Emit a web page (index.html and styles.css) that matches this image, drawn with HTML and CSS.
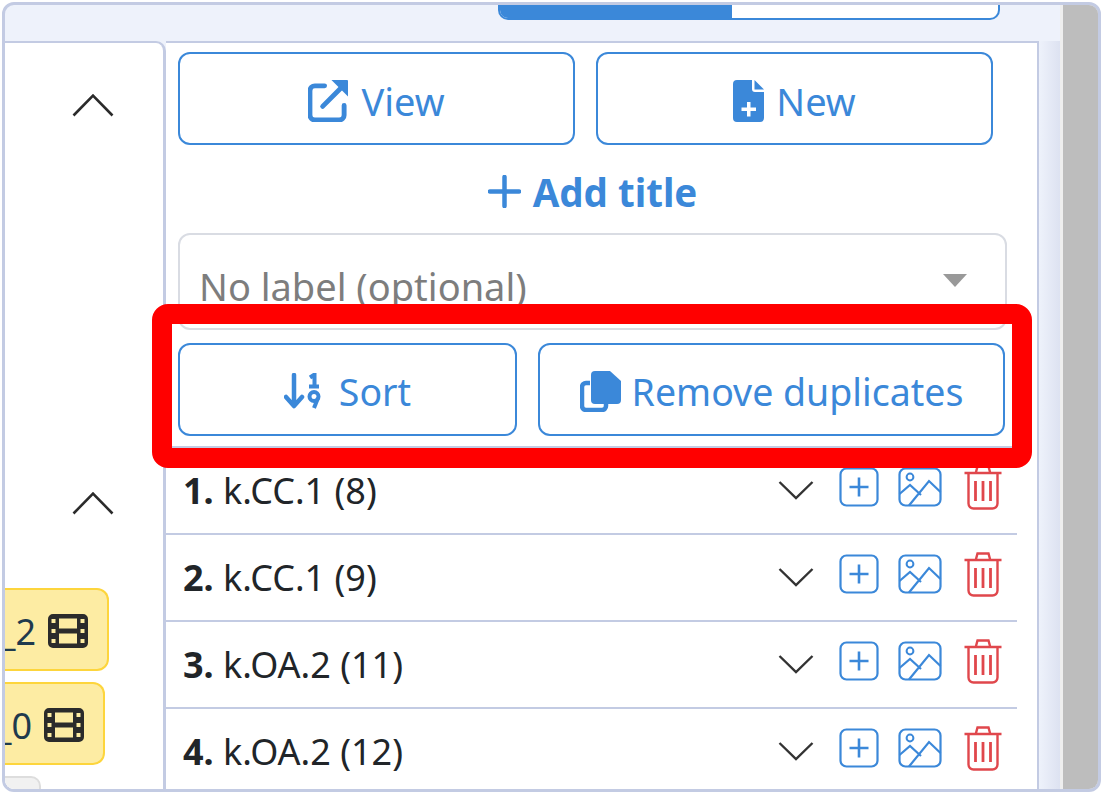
FILE: index.html
```html
<!DOCTYPE html>
<html lang="en">
<head>
    <meta charset="UTF-8">
    <title>Titles</title>
    <link rel="stylesheet" href="styles.css">
</head>
<body>
    <svg class="defs" width="0" height="0">
        <symbol id="i-chevron-up" viewBox="0 0 42 24"><path d="M1.5 22.5 21 2.5l19.5 20" fill="none" stroke="currentColor" stroke-width="2.6"/></symbol>
        <symbol id="i-chevron-down" viewBox="0 0 36 20"><path d="M1.500 2 18 18 34.500 2" fill="none" stroke="currentColor" stroke-width="2.4"/></symbol>
        <symbol id="i-plus" viewBox="0 0 40 40"><rect x="1.500" y="1.500" width="37" height="37" rx="6" fill="none" stroke="currentColor" stroke-width="2.200"/><path d="M20 10.500v19M10.500 20h19" fill="none" stroke="currentColor" stroke-width="2.600"/></symbol>
        <symbol id="i-image" viewBox="0 0 44 40"><rect x="1.500" y="1.500" width="41" height="37" rx="6" fill="none" stroke="currentColor" stroke-width="2.200"/><circle cx="12" cy="10" r="3.400" fill="none" stroke="currentColor" stroke-width="2"/><path d="M1.500 27 12 18l11 10M11 38.500 31 14l11.500 11" fill="none" stroke="currentColor" stroke-width="2.200"/></symbol>
        <symbol id="i-trash" viewBox="0 0 38 46"><path d="M4.500 10v29.500a5 5 0 0 0 5 5h19a5 5 0 0 0 5-5V10M.5 9h37M12 8l1.500-5.500h11L26 8" fill="none" stroke="currentColor" stroke-width="2.400"/><path d="M11.500 17v20M19 17v20M26.500 17v20" fill="none" stroke="currentColor" stroke-width="2.800"/></symbol>
        <symbol id="i-film" viewBox="0 0 40 34"><path fill-rule="evenodd" fill="currentColor" d="M5 0h30a5 5 0 0 1 5 5v24a5 5 0 0 1-5 5H5a5 5 0 0 1-5-5V5a5 5 0 0 1 5-5zM3.500 5v4h4V5zM32.500 5v4h4V5zM3.500 15v4h4v-4zM32.500 15v4h4v-4zM3.500 25v4h4v-4zM32.500 25v4h4v-4zM11 4.500v10h18v-10zM11 19.500v10h18v-10z"/></symbol>
    </svg>

    <div class="frame">
        <div class="app">
            <div class="tabbar">
                <div class="switch">
                    <span class="switch-on"></span>
                    <span class="switch-off"></span>
                </div>
            </div>
            <div class="columns">
                <aside class="left">
                    <div class="left-head">
                        <svg class="chev-up"><use href="#i-chevron-up"/></svg>
                    </div>
                    <div class="left-head second">
                        <svg class="chev-up"><use href="#i-chevron-up"/></svg>
                    </div>
                    <div class="chip one">_2 <svg class="film"><use href="#i-film"/></svg></div>
                    <div class="chip two">_0 <svg class="film"><use href="#i-film"/></svg></div>
                    <div class="left-tab"></div>
                </aside>

                <main class="detail">
                    <div class="actions">
                        <div class="btn-row">
                            <button class="btn big">
                                <svg class="ico" width="41" height="43" viewBox="0 0 42 44"><path d="M17 7H7a5 5 0 0 0-5 5v25a5 5 0 0 0 5 5h25a5 5 0 0 0 5-5V27" fill="none" stroke="currentColor" stroke-width="5" stroke-linecap="round"/><path d="M15 28 33 10" stroke="currentColor" stroke-width="5" stroke-linecap="round"/><path d="M24 1h16a1 1 0 0 1 1 1v16z" fill="currentColor"/></svg>
                                View
                            </button>
                            <button class="btn big">
                                <svg class="ico" width="31" height="42" viewBox="0 0 31 42"><path fill-rule="evenodd" fill="currentColor" d="M4 0h15v9a3 3 0 0 0 3 3h9v26a4 4 0 0 1-4 4H4a4 4 0 0 1-4-4V4a4 4 0 0 1 4-4zM14 22v5.500H8.500v3.500H14v5.500h3.500V31H23v-3.500h-5.500V22z"/><path fill="currentColor" d="M21.500 0 31 9.500h-9.500z"/></svg>
                                New
                            </button>
                        </div>
                        <div class="add-title">
                            <svg width="33" height="33" viewBox="0 0 33 33"><path d="M16.500 2v29M2 16.500h29" stroke="currentColor" stroke-width="4.500" stroke-linecap="round"/></svg>
                            Add title
                        </div>
                        <div class="select">
                            <span>No label (optional)</span>
                            <i class="caret"></i>
                        </div>
                        <div class="btn-row tools">
                            <button class="btn sort">
                                <svg class="ico" width="38" height="36" viewBox="0 0 38 36"><path d="M10 2v30M2 24l8 9 8-9" fill="none" stroke="currentColor" stroke-width="4.500" stroke-linecap="round" stroke-linejoin="round"/><path d="M26 4.500l4.500-3v11M25 13.500h10" fill="none" stroke="currentColor" stroke-width="4"/><circle cx="30" cy="23.500" r="4.500" fill="none" stroke="currentColor" stroke-width="4"/><path d="M34 25l-4 10" stroke="currentColor" stroke-width="4"/></svg>
                                Sort
                            </button>
                            <button class="btn dedupe">
                                <svg class="ico" width="41" height="41" viewBox="0 0 41 41"><path d="M10 12H6a4 4 0 0 0-4 4v19a4 4 0 0 0 4 4h16a4 4 0 0 0 4-4v-2" fill="none" stroke="currentColor" stroke-width="4.500"/><path fill="currentColor" d="M15 0h15l11 10v19a4 4 0 0 1-4 4H15a4 4 0 0 1-4-4V4a4 4 0 0 1 4-4z"/></svg>
                                Remove duplicates
                            </button>
                        </div>
                    </div>

                    <ol class="titles">
                        <li class="title-row">
                            <span class="title-name"><b>1.</b> k.CC.1 (8)</span>
                            <span class="row-icons">
                                <svg class="chev-down"><use href="#i-chevron-down"/></svg>
                                <svg class="add"><use href="#i-plus"/></svg>
                                <svg class="pic"><use href="#i-image"/></svg>
                                <svg class="bin"><use href="#i-trash"/></svg>
                            </span>
                        </li>
                        <li class="title-row">
                            <span class="title-name"><b>2.</b> k.CC.1 (9)</span>
                            <span class="row-icons">
                                <svg class="chev-down"><use href="#i-chevron-down"/></svg>
                                <svg class="add"><use href="#i-plus"/></svg>
                                <svg class="pic"><use href="#i-image"/></svg>
                                <svg class="bin"><use href="#i-trash"/></svg>
                            </span>
                        </li>
                        <li class="title-row">
                            <span class="title-name"><b>3.</b> k.OA.2 (11)</span>
                            <span class="row-icons">
                                <svg class="chev-down"><use href="#i-chevron-down"/></svg>
                                <svg class="add"><use href="#i-plus"/></svg>
                                <svg class="pic"><use href="#i-image"/></svg>
                                <svg class="bin"><use href="#i-trash"/></svg>
                            </span>
                        </li>
                        <li class="title-row">
                            <span class="title-name"><b>4.</b> k.OA.2 (12)</span>
                            <span class="row-icons">
                                <svg class="chev-down"><use href="#i-chevron-down"/></svg>
                                <svg class="add"><use href="#i-plus"/></svg>
                                <svg class="pic"><use href="#i-image"/></svg>
                                <svg class="bin"><use href="#i-trash"/></svg>
                            </span>
                        </li>
                    </ol>
                </main>
                <div class="gutter"></div>
            </div>
        </div>
        <div class="scrollbar"></div>
        <div class="highlight"></div>
    </div>
</body>
</html>
```

FILE: styles.css
```css
* {
    box-sizing: border-box;
}
html, body {
    margin: 0;
    height: 100%;
    background: #fff;
    overflow: hidden;
}
body {
    padding: 2px 2px 1px 2px;
    font-family: "Noto Sans", "Open Sans", Arial, sans-serif;
    font-size: 36px;
    color: #212529;
}
.defs {
    position: absolute;
}
.frame {
    position: relative;
    display: flex;
    height: 100%;
    border: 3px solid #c3cbe3;
    border-radius: 12px;
    overflow: hidden;
    background: #eef2fb;
}
.app {
    flex: 1;
    display: flex;
    flex-direction: column;
    min-width: 0;
}
.scrollbar {
    width: 38px;
    background: #bdbdbd;
    border-left: 3px solid #eee;
}

/* top switch */
.tabbar {
    height: 36px;
    padding-left: 493px;
    flex: none;
}
.switch {
    display: flex;
    width: 502px;
    height: 15px;
    border: 2px solid #3b88d9;
    border-top: 0;
    border-radius: 0 0 10px 10px;
    overflow: hidden;
    background: #fff;
}
.switch-on {
    width: 232px;
    background: #3b88d9;
}

.columns {
    flex: 1;
    display: flex;
    min-height: 0;
}

/* left column */
.left {
    width: 161px;
    flex: none;
    background: #fff;
    border-right: 3px solid #c3cbe3;
    border-top: 2px solid #c3cbe3;
    border-top-right-radius: 10px;
    display: flex;
    flex-direction: column;
    overflow: hidden;
}
.left-head {
    flex: none;
    height: 48px;
    margin-top: 50px;
    padding-left: 67px;
}
.left-head.second {
    margin-top: 350px;
    height: 48px;
}
.chev-up {
    display: block;
    width: 42px;
    height: 24px;
    color: #2b2b2b;
}
.chip {
    flex: none;
    display: flex;
    align-items: center;
    justify-content: flex-end;
    gap: 12px;
    height: 83px;
    padding: 3px 19px 0 0;
    background: #fdeca3;
    border: 2px solid #fdd53c;
    border-left: 0;
    border-radius: 0 12px 12px 0;
    white-space: nowrap;
    color: #1f3a4d;
}
.chip.one {
    width: 104px;
    margin-top: 49px;
}
.chip.two {
    width: 100px;
    margin-top: 11px;
}
.film {
    width: 40px;
    height: 34px;
    color: #2b2b2b;
    flex: none;
}
.left-tab {
    flex: none;
    width: 36px;
    height: 20px;
    margin-top: 11px;
    background: #f1f1f1;
    border: 2px solid #ddd;
    border-left: 0;
    border-radius: 0 10px 0 0;
}

/* right panel */
.detail {
    width: 873px;
    flex: none;
    background: #fff;
    border-top: 2px solid #c3cbe3;
    border-right: 2px solid #c3cbe3;
    overflow: hidden;
}
.gutter {
    flex: 1;
    background: linear-gradient(to right, #eef2fb, #dde2f1);
}
.actions {
    padding: 9px 0 0 12px;
}
.btn-row {
    display: flex;
    gap: 21px;
}
.btn {
    display: flex;
    align-items: center;
    justify-content: center;
    gap: 12px;
    height: 93px;
    padding: 3px 0 0;
    background: #fff;
    border: 2px solid #3b88d9;
    border-radius: 12px;
    color: #3b88d9;
    font: inherit;
    font-size: 37.5px;
}
.btn.big {
    width: 397px;
    padding-top: 4px;
    font-size: 38px;
}
.btn.sort {
    width: 339px;
    gap: 17px;
}
.btn.dedupe {
    width: 467px;
    gap: 11px;
}
.add-title {
    display: flex;
    align-items: center;
    justify-content: center;
    gap: 12px;
    width: 829px;
    height: 88px;
    padding: 5px 0 0;
    color: #3b88d9;
    font-size: 38.5px;
    font-weight: 700;
}
.select {
    display: flex;
    align-items: center;
    justify-content: space-between;
    width: 829px;
    height: 97px;
    padding: 8px 38px 0 19px;
    border: 2px solid #d9dce3;
    border-radius: 12px;
    color: #7d7d7d;
    font-size: 38px;
}
.caret {
    width: 0;
    height: 0;
    margin-top: -10px;
    border-left: 12px solid transparent;
    border-right: 12px solid transparent;
    border-top: 13px solid #999;
}
.tools {
    margin-top: 13px;
}
.titles {
    list-style: none;
    width: 851px;
    margin: 10px 0 0;
    padding: 0;
    border-top: 2px solid #c3cbe3;
}
.title-row {
    display: flex;
    align-items: center;
    justify-content: space-between;
    height: 87px;
    padding: 0 15px 0 17px;
    border-bottom: 2px solid #c3cbe3;
}
.title-name b {
    font-weight: 700;
}
.row-icons {
    display: flex;
    align-items: center;
    margin-bottom: 7px;
}
.chev-down {
    width: 36px;
    height: 20px;
    color: #333;
    margin-right: 25px;
    margin-top: 6px;
}
.add {
    width: 40px;
    height: 40px;
    color: #3b88d9;
    margin-right: 19px;
}
.pic {
    width: 44px;
    height: 40px;
    color: #3b88d9;
    margin-right: 22px;
}
.bin {
    width: 38px;
    height: 46px;
    color: #e0474c;
}

/* red annotation over the screenshot */
.highlight {
    position: absolute;
    left: 147px;
    top: 299px;
    width: 880px;
    height: 164px;
    border: 20px solid #f00;
    border-radius: 16px;
}
```
